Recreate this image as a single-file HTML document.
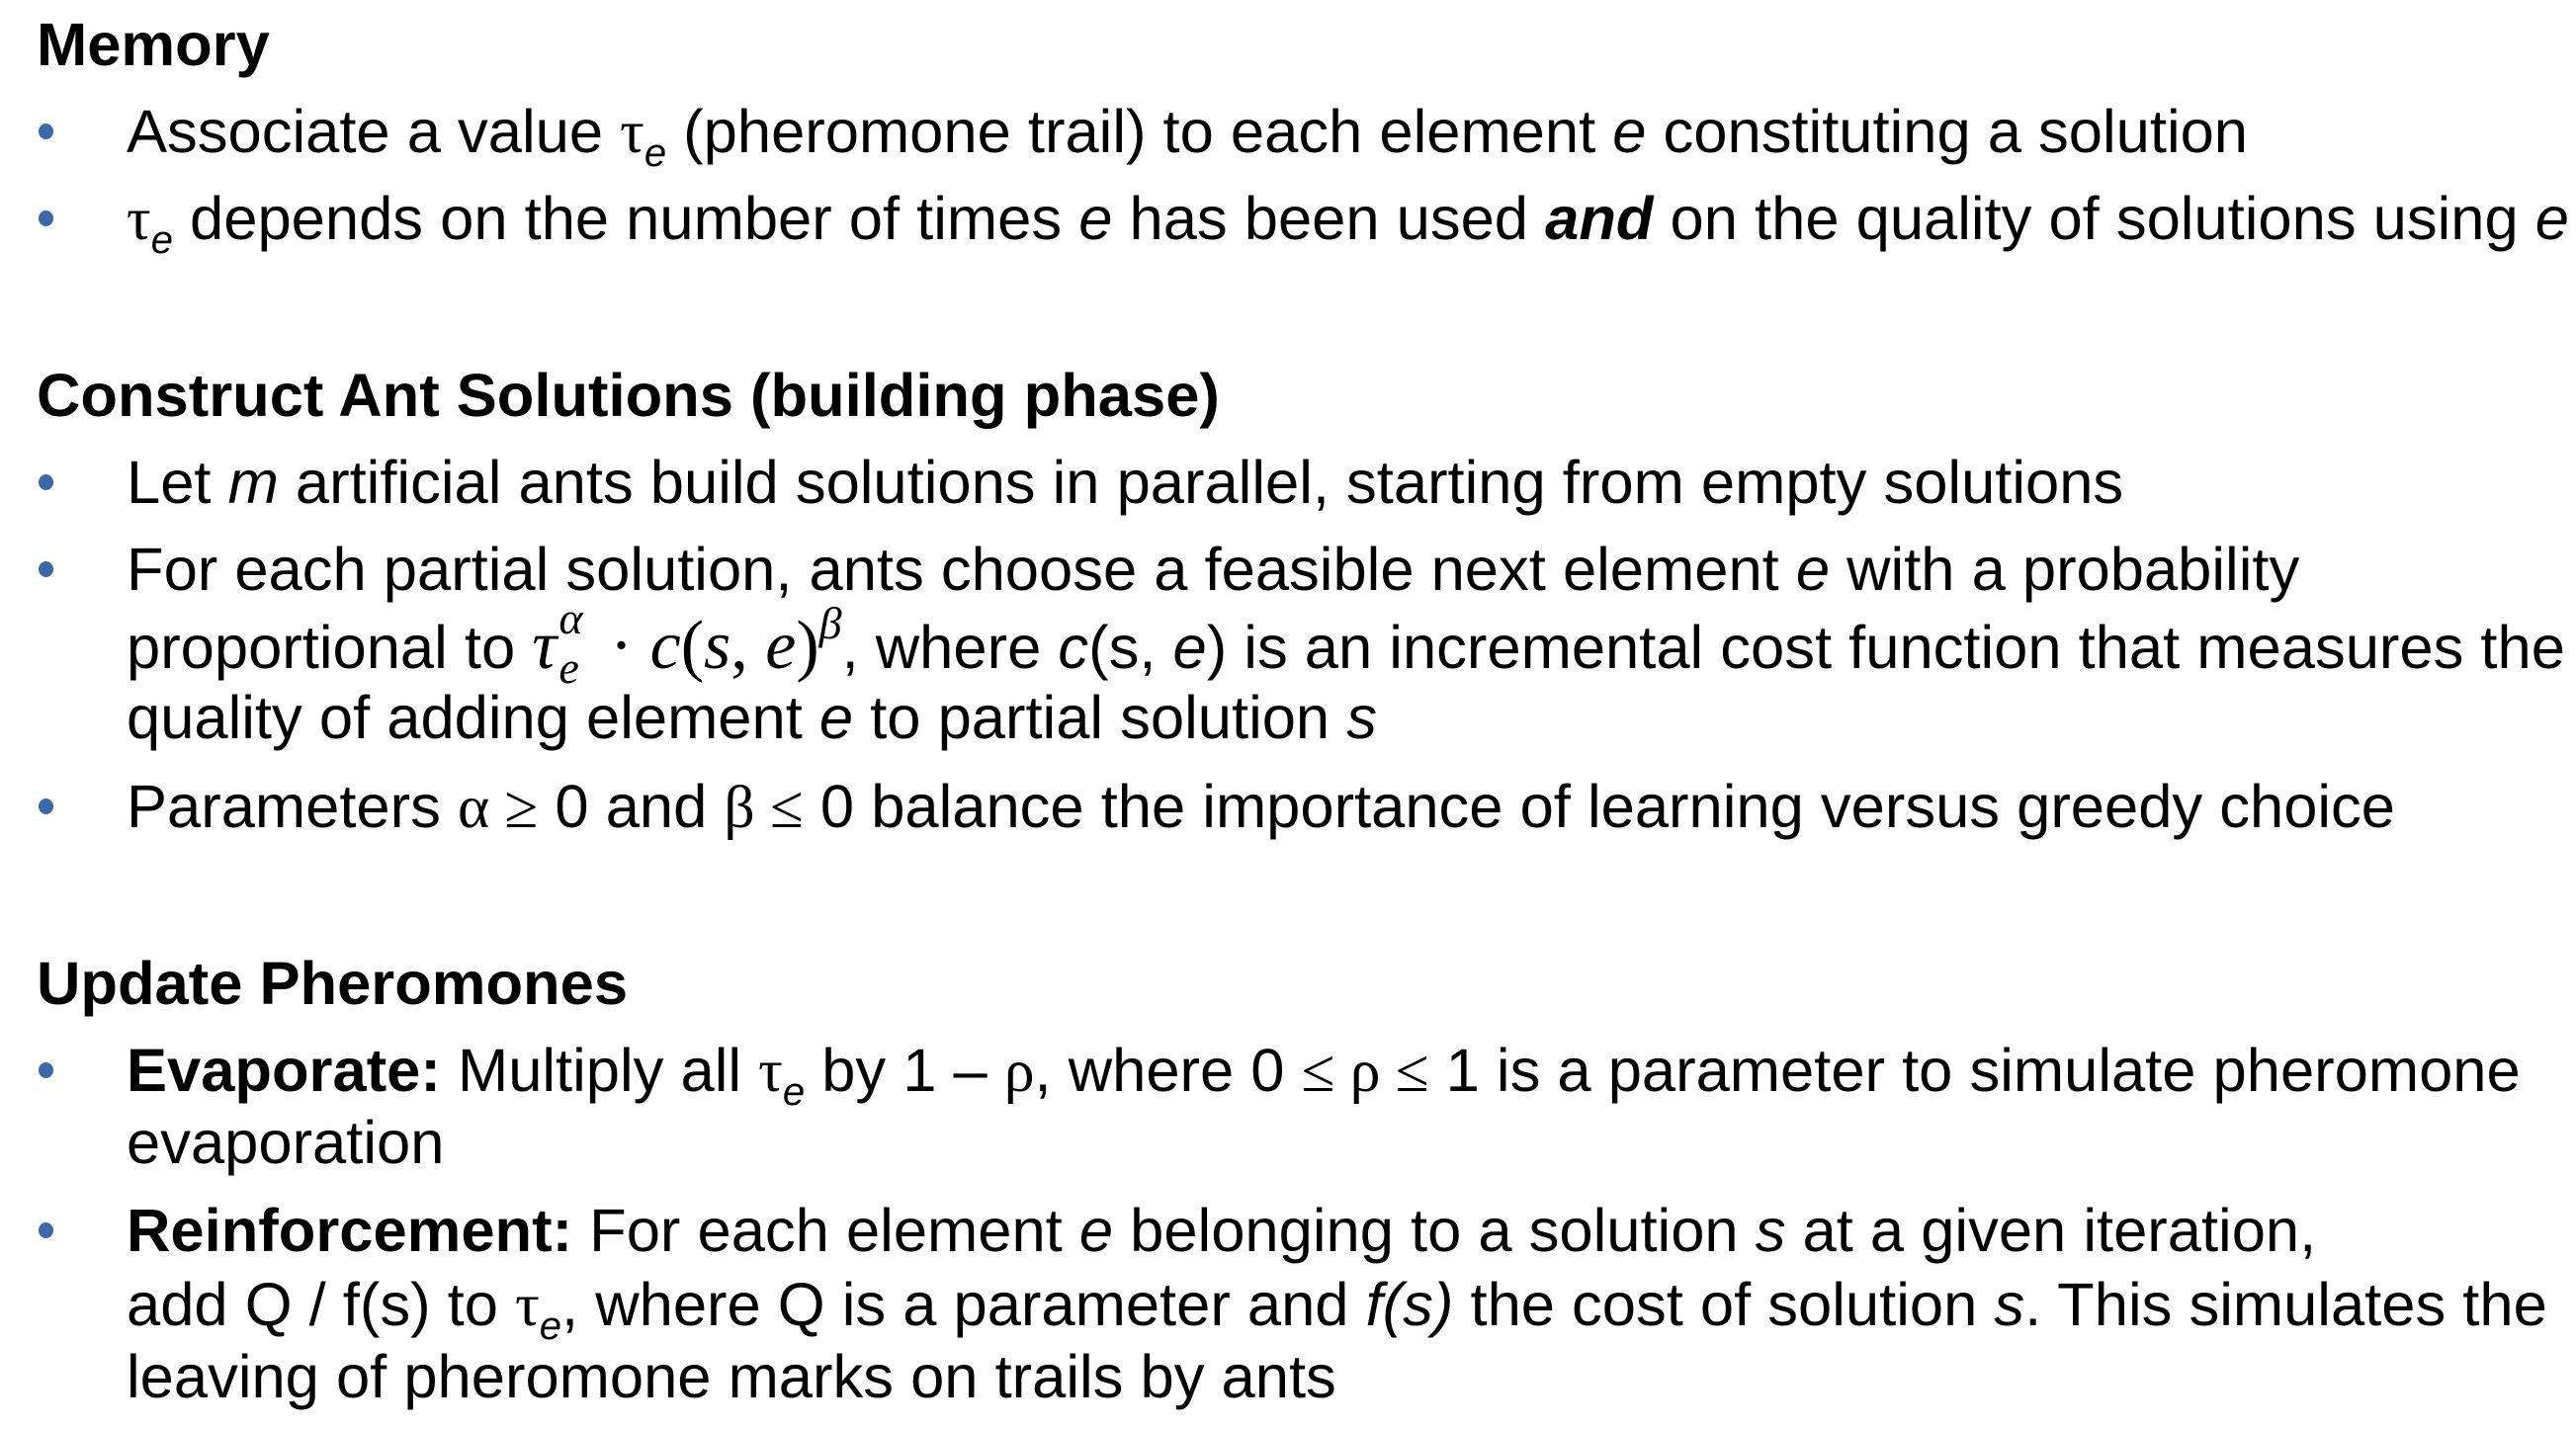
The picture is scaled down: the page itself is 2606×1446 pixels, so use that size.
<!DOCTYPE html>
<html><head><meta charset="utf-8"><style>
html,body{margin:0;padding:0;background:#fff;}
body{width:2606px;height:1446px;position:relative;overflow:hidden;font-family:"Liberation Sans",Arial,sans-serif;color:#000;}
.l{position:absolute;left:128px;font-size:61.5px;line-height:60px;white-space:nowrap;}
.h{left:37px;font-weight:bold;}
.d{position:absolute;left:39px;width:15px;height:16px;border-radius:50%;background:#3a68a8;}
sub{font-size:40px;vertical-align:-14px;line-height:0;font-style:italic;}
.m{font-family:"Liberation Serif",serif;font-style:italic;font-size:70px;}
.mu{font-family:"Liberation Serif",serif;}
.f{font-family:"Liberation Serif",serif;font-size:70px;}
.st{display:inline-block;position:relative;width:36px;height:1px;}
.st span{position:absolute;left:2px;font-size:46px;line-height:46px;}
</style></head><body>
<div class="l h" style="top:16px">Memory</div>
<div class="d" style="top:125px"></div>
<div class="l" style="top:104px">Associate a value <span class="mu">τ</span><sub>e</sub> (pheromone trail) to each element <i>e</i> constituting a solution</div>
<div class="d" style="top:213px"></div>
<div class="l" style="top:192px"><span class="mu">τ</span><sub>e</sub> depends on the number of times <i>e</i> has been used <b><i>and</i></b> on the quality of solutions using <i>e</i></div>

<div class="l h" style="top:371px">Construct Ant Solutions (building phase)</div>
<div class="d" style="top:480px"></div>
<div class="l" style="top:459px">Let <i>m</i> artificial ants build solutions in parallel, starting from empty solutions</div>
<div class="d" style="top:568px"></div>
<div class="l" style="top:547px">For each partial solution, ants choose a feasible next element <i>e</i> with a probability</div>
<div class="l" style="top:624px">proportional to <span class="m">τ</span><span class="st m"><span style="top:-72px">α</span><span style="top:-22px">e</span></span><span class="f"> · </span><span class="m">c</span><span class="f">(</span><span class="m">s</span><span class="f">, </span><span class="m">e</span><span class="f">)</span><span class="m" style="font-size:46px;vertical-align:30px;line-height:0">β</span>, where <i>c</i>(s, <i>e</i>) is an incremental cost function that measures the</div>
<div class="l" style="top:697px">quality of adding element <i>e</i> to partial solution <i>s</i></div>
<div class="d" style="top:808px"></div>
<div class="l" style="top:787px">Parameters <span class="mu">α ≥</span> 0 and <span class="mu">β ≤</span> 0 balance the importance of learning versus greedy choice</div>

<div class="l h" style="top:966px">Update Pheromones</div>
<div class="d" style="top:1075px"></div>
<div class="l" style="top:1054px"><b>Evaporate:</b> Multiply all <span class="mu">τ</span><sub>e</sub> by 1 – <span class="mu">ρ</span>, where 0 <span class="mu">≤ ρ ≤</span> 1 is a parameter to simulate pheromone</div>
<div class="l" style="top:1127px">evaporation</div>
<div class="d" style="top:1237px"></div>
<div class="l" style="top:1216px"><b>Reinforcement:</b> For each element <i>e</i> belonging to a solution <i>s</i> at a given iteration,</div>
<div class="l" style="top:1291px">add Q / f(s) to <span class="mu">τ</span><sub>e</sub>, where Q is a parameter and <i>f(s)</i> the cost of solution <i>s</i>. This simulates the</div>
<div class="l" style="top:1364px">leaving of pheromone marks on trails by ants</div>
</body></html>
